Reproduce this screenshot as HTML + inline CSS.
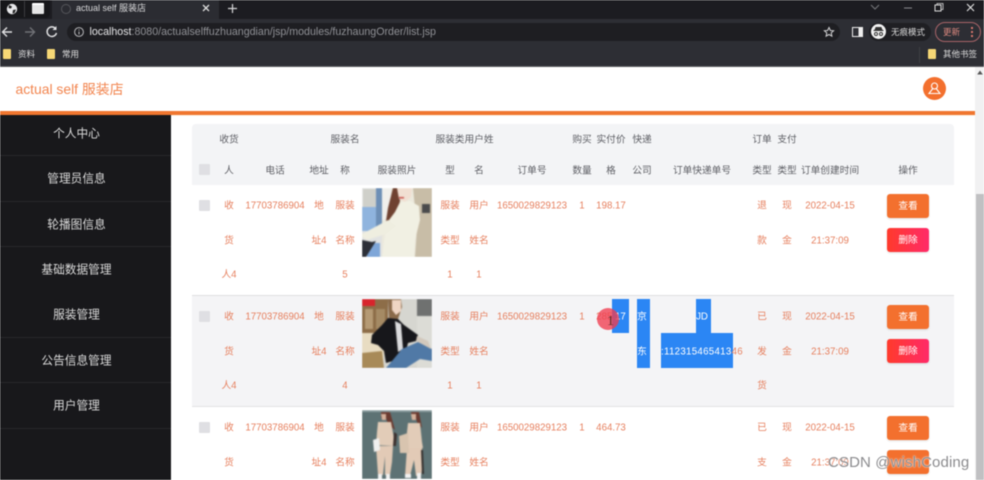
<!DOCTYPE html>
<html lang="zh"><head><meta charset="utf-8"><title>actual self 服装店</title>
<style>
html,body{margin:0;padding:0;width:984px;height:480px;overflow:hidden;background:#fff}
#root{position:relative;width:984px;height:480px;overflow:hidden;font-family:"Liberation Sans","Noto Sans CJK SC",sans-serif;filter:blur(.5px)}
.a{position:absolute}
.t{position:absolute;transform:translate(-50%,calc(-50% + 1.6px));white-space:nowrap;font-size:9.7px;line-height:12px}
.o .t{color:#e6805f}
.h .t{color:#5f6066}
.side{position:absolute;left:76.5px;transform:translate(-50%,-50%);margin-top:-.6px;font-size:11.7px;color:#dcdcdc;white-space:nowrap}
.ln{position:absolute;left:0;width:171px;height:1px;background:#27272a}
.cb{position:absolute;left:199px;width:11px;height:11px;background:#dfdfe3;border-radius:1px}
.bt{position:absolute;left:887px;width:42px;height:24px;border-radius:3px;color:#fff;font-size:9.7px;line-height:25px;text-align:center;box-shadow:0 1px 2px rgba(0,0,0,.12)}
.v{background:#f3702e}.d{background:linear-gradient(90deg,#ff3a2c,#ff2a68)}
.bl{position:absolute;background:#2b86f4}
.ph{position:absolute;left:362px;width:70px;height:69px;overflow:hidden}
.ph svg{display:block;filter:blur(.6px)}
.bm{position:absolute;width:8px;height:10px;background:#f6d775;border-radius:1px}
.chr{position:absolute;color:#cfd0d4;white-space:nowrap}
</style></head><body><div id="root">

<!-- browser chrome -->
<div class="a" style="left:0;top:0;width:984px;height:19px;background:#1c1c21"></div>
<div class="a" style="left:0;top:0;width:50px;height:18px;background:#17171a;border-radius:0 0 5px 0"></div>
<div class="a" style="left:52px;top:0;width:167px;height:19px;background:#2b2c32"></div>
<div class="a" style="left:0;top:19px;width:984px;height:47px;background:#2d2e34"></div>
<div class="a" style="left:0;top:66px;width:984px;height:1px;background:#5c5d62"></div>
<svg class="a" style="left:5px;top:2px" width="14" height="14" viewBox="0 0 14 14"><circle cx="7" cy="7" r="5.2" fill="#e8e8ea"/><path d="M4 3l3 1.5-1 2-2.5-.5zM8 8l3-.5-1.5 3.5-2 .5z" fill="#222"/></svg>
<div class="a" style="left:24px;top:1px;width:1px;height:16px;background:#3c3c40"></div>
<div class="a" style="left:32px;top:3px;width:12px;height:9px;background:#e6e6e6;border-top:2px solid #fff;border-radius:1px"></div>
<div class="a" style="left:61px;top:4px;width:8px;height:8px;border-radius:50%;border:1px solid #55565b"></div>
<div class="chr" style="left:76px;top:2px;font-size:9px;line-height:12px;color:#d8d8da">actual self 服装店</div>
<svg class="a" style="left:201px;top:3px" width="10" height="10" viewBox="0 0 10 10"><path d="M2 2l6 6M8 2L2 8" stroke="#dcdcdc" stroke-width="1.3"/></svg>
<svg class="a" style="left:227px;top:3px" width="11" height="11" viewBox="0 0 11 11"><path d="M5.5 1v9M1 5.500h9" stroke="#d6d6d8" stroke-width="1.2"/></svg>
<svg class="a" style="left:870px;top:2px" width="110" height="12" viewBox="0 0 110 12"><path d="M1 3l4 4 4-4" fill="none" stroke="#77787c"/><path d="M34 6h8" stroke="#8a8a8e"/><rect x="65" y="3" width="6" height="6" fill="none" stroke="#dcdcdc"/><path d="M67 3V1.500h6v6h-2" fill="none" stroke="#dcdcdc" stroke-width=".8"/><path d="M97 2l7 7M104 2l-7 7" stroke="#e4e4e4" stroke-width="1.1"/></svg>
<svg class="a" style="left:1px;top:23px" width="62" height="18" viewBox="0 0 62 18"><path d="M11 9H2M6 4.500L1.500 9 6 13.500" fill="none" stroke="#e0e0e2" stroke-width="1.400"/><path d="M24 9h9M29 4.500L33.500 9 29 13.500" fill="none" stroke="#707176" stroke-width="1.400"/><path d="M54.500 5.500A4.800 4.800 0 1 0 55.500 10" fill="none" stroke="#e2e2e4" stroke-width="1.400"/><path d="M55.500 3v4h-4z" fill="#e2e2e4"/></svg>
<div class="a" style="left:67px;top:23px;width:773px;height:18px;background:#1e1e22;border-radius:9px"></div>
<svg class="a" style="left:73px;top:26px" width="12" height="12" viewBox="0 0 12 12"><circle cx="6" cy="6" r="4.400" fill="none" stroke="#b8b8bb"/><path d="M6 5.500v3M6 3.500v1" stroke="#b8b8bb"/></svg>
<div class="chr" style="left:89.500px;top:25px;font-size:10.650px;line-height:14px;color:#8f9095"><span style="color:#e4e4e6">localhost</span>:8080/actualselffuzhuangdian/jsp/modules/fuzhaungOrder/list.jsp</div>
<svg class="a" style="left:823px;top:26px" width="12" height="12" viewBox="0 0 12 12"><path d="M6 1.500l1.400 3 3.200.3-2.400 2.100.7 3.200L6 8.500l-2.900 1.600.7-3.200L1.400 4.800l3.200-.3z" fill="none" stroke="#d2d2d4"/></svg>
<div class="a" style="left:852px;top:27px;width:9px;height:8px;border:1px solid #eee;background:linear-gradient(90deg,#2e2f35 60%,#eee 60%)"></div>
<div class="a" style="left:869px;top:23px;width:62px;height:18px;background:#1f1f23;border-radius:9px"></div>
<div class="a" style="left:871px;top:24px;width:15px;height:15px;background:#f2f2f2;border-radius:50%"></div>
<svg class="a" style="left:873px;top:27px" width="11" height="9" viewBox="0 0 11 9"><path d="M3 .5h5l1 2.500H2zM.5 3.500h10" stroke="#333" fill="#333"/><circle cx="3" cy="7" r="1.500" fill="none" stroke="#333"/><circle cx="8" cy="7" r="1.500" fill="none" stroke="#333"/></svg>
<div class="chr" style="left:891px;top:26px;font-size:8.500px;line-height:12px;color:#ddd">无痕模式</div>
<div class="a" style="left:935px;top:22px;width:44px;height:18px;border:1px solid #a86468;border-radius:10px"></div>
<div class="chr" style="left:943px;top:26px;font-size:8.500px;line-height:12px;color:#e08a80">更新</div>
<svg class="a" style="left:970px;top:26px" width="4" height="12" viewBox="0 0 4 12"><circle cx="2" cy="2" r="1.100" fill="#e07a70"/><circle cx="2" cy="6" r="1.100" fill="#e07a70"/><circle cx="2" cy="10" r="1.100" fill="#e07a70"/></svg>
<div class="bm" style="left:3px;top:49px"></div>
<div class="chr" style="left:18px;top:48px;font-size:8.500px;line-height:12px;color:#ddd">资料</div>
<div class="bm" style="left:47px;top:49px"></div>
<div class="chr" style="left:62px;top:48px;font-size:8.500px;line-height:12px;color:#ddd">常用</div>
<div class="a" style="left:919px;top:47px;width:1px;height:16px;background:#3e3f44"></div>
<div class="bm" style="left:928px;top:49px"></div>
<div class="chr" style="left:943px;top:48px;font-size:8.500px;line-height:12px;color:#ddd">其他书签</div>

<!-- app header -->
<div class="a" style="left:15.500px;top:81px;font-size:13.900px;line-height:17px;color:#f2854f;white-space:nowrap">actual self 服装店</div>
<div class="a" style="left:923px;top:77px;width:23px;height:23px;border-radius:50%;background:#f3702e"></div>
<svg class="a" style="left:927px;top:81px" width="15" height="15" viewBox="0 0 15 15"><circle cx="7.500" cy="5" r="3" fill="none" stroke="#fff" stroke-width="1.100"/><path d="M5.800 7.500L2 12.500h11L9.200 7.500" fill="none" stroke="#fff" stroke-width="1.100"/></svg>
<div class="a" style="left:0;top:111px;width:975px;height:4px;background:#f0762f"></div>
<div class="a" style="left:171px;top:115px;width:804px;height:1px;background:#fdf3e6"></div>

<!-- scrollbar -->
<div class="a" style="left:975px;top:67px;width:9px;height:413px;background:#f1f1f2"></div>
<div class="a" style="left:976px;top:194px;width:8px;height:286px;background:#c0c0c2"></div>
<svg class="a" style="left:977px;top:70px" width="6" height="5" viewBox="0 0 6 5"><path d="M3 .5L5.800 4.500H.2z" fill="#555"/></svg>

<!-- sidebar -->
<div class="a" style="left:0;top:115px;width:171px;height:365px;background:#18181b"></div>
<div class="ln" style="top:155px"></div><div class="ln" style="top:201px"></div><div class="ln" style="top:246px"></div><div class="ln" style="top:337px"></div><div class="ln" style="top:382px"></div><div class="ln" style="top:428px"></div>
<div class="side" style="top:133.500px">个人中心</div>
<div class="side" style="top:179px">管理员信息</div>
<div class="side" style="top:224.500px">轮播图信息</div>
<div class="side" style="top:269.700px">基础数据管理</div>
<div class="side" style="top:315px">服装管理</div>
<div class="side" style="top:360.500px">公告信息管理</div>
<div class="side" style="top:406px">用户管理</div>

<!-- table backgrounds -->
<div class="a" style="left:192px;top:124px;width:762px;height:61px;background:#f3f4f6;border-radius:4px 4px 0 0"></div>
<div class="a" style="left:192px;top:295px;width:762px;height:1px;background:#dedee0"></div>
<div class="a" style="left:192px;top:296px;width:762px;height:110px;background:#f4f4f6"></div>
<div class="a" style="left:192px;top:406px;width:762px;height:1px;background:#e2e2e4"></div>

<!-- header text -->
<div class="h">
<span class="t" style="left:229px;top:139px">收货</span>
<span class="t" style="left:345px;top:139px">服装名</span>
<span class="t" style="left:464.500px;top:139px">服装类用户姓</span>
<span class="t" style="left:582px;top:139px">购买</span>
<span class="t" style="left:611px;top:139px">实付价</span>
<span class="t" style="left:642px;top:139px">快递</span>
<span class="t" style="left:762px;top:139px">订单</span>
<span class="t" style="left:787px;top:139px">支付</span>
<span class="t" style="left:229px;top:170px">人</span>
<span class="t" style="left:275px;top:170px">电话</span>
<span class="t" style="left:319px;top:170px">地址</span>
<span class="t" style="left:345px;top:170px">称</span>
<span class="t" style="left:397px;top:170px">服装照片</span>
<span class="t" style="left:450px;top:170px">型</span>
<span class="t" style="left:479px;top:170px">名</span>
<span class="t" style="left:532px;top:170px">订单号</span>
<span class="t" style="left:582px;top:170px">数量</span>
<span class="t" style="left:611px;top:170px">格</span>
<span class="t" style="left:642px;top:170px">公司</span>
<span class="t" style="left:702px;top:170px">订单快递单号</span>
<span class="t" style="left:762px;top:170px">类型</span>
<span class="t" style="left:787px;top:170px">类型</span>
<span class="t" style="left:830px;top:170px">订单创建时间</span>
<span class="t" style="left:908px;top:170px">操作</span>
</div>
<div class="cb" style="top:164px"></div>

<!-- photos -->
<div class="ph" style="top:188px"><svg width="70" height="69" viewBox="0 0 70 69">
<rect width="70" height="69" fill="#ece9dd"/>
<rect width="20" height="69" fill="#e2e3e2"/><rect x="1" y="1" width="13" height="18" fill="#cfd0ca"/>
<rect x="0" y="19" width="15" height="24" fill="#8fb4de"/><rect x="14" y="0" width="6" height="40" fill="#6d8fb6"/>
<rect x="20" y="0" width="9" height="32" fill="#f0f0ec"/><rect x="5" y="55" width="13" height="14" fill="#7ea6d8"/>
<path d="M51 0H70V69H53L55 40z" fill="#c8bda7"/>
<path d="M31 0H40L38 12 37 24 27 36 24 33 26 20z" fill="#6f4231"/>
<path d="M35 0H50L49 9 43 14 37 11z" fill="#f1dfd2"/><rect x="37" y="9" width="5" height="1.500" fill="#c8504a"/>
<path d="M38 14L48 13 57 18 58 32 53 52 52 69H20L23 46 24 36 33 24z" fill="#f1f0e3"/>
<path d="M26 32L34 38 24 46 5 52 0 49 0 46z" fill="#efeee0"/>
<path d="M0 52L10 54 14 53 4 69H0z" fill="#2d3038"/>
<rect x="60" y="16" width="8" height="9" fill="#4a4a4c"/>
</svg></div>
<div class="ph" style="top:299px"><svg width="70" height="69" viewBox="0 0 70 69">
<rect width="70" height="69" fill="#d6d6d0"/>
<rect width="26" height="34" fill="#8d6d48"/><rect x="3" y="10" width="8" height="20" fill="#b59a74"/><rect x="14" y="10" width="9" height="20" fill="#a58a64"/>
<rect x="55" y="0" width="15" height="17" fill="#6f7170"/><rect x="55" y="17" width="15" height="52" fill="#dcdcd6"/>
<rect width="13" height="7" fill="#d8242c"/>
<path d="M0 34H20L23 48 20 69H0z" fill="#e8dcc2"/><path d="M0 54L20 52 22 69H0z" fill="#a88a58"/>
<path d="M26 0H39L40 8 36 20 27 20z" fill="#8a6a4a"/><path d="M30 1H39L39 12 34 16 30 11z" fill="#efd5c3"/>
<path d="M26 19L36 20 42 26 56 36 54 42 46 44 44 52 38 60 24 64 22 52 16 46 9 44 10 36 20 26z" fill="#17171b"/>
<path d="M33 22L39 25 41 50 36 53z" fill="#dcdcde"/>
<path d="M24 69L30 62 40 50 56 43 70 50 70 62 58 60 44 69z" fill="#5079a6"/>
<path d="M55 37L66 42 69 50 60 45 54 42z" fill="#d2c8bc"/>
</svg></div>
<div class="ph" style="top:410px"><svg width="70" height="69" viewBox="0 0 70 69">
<rect width="70" height="69" fill="#5d7274"/>
<path d="M0 0H70V2H0z" fill="#8ea0a2"/>
<path d="M19 2H28L33 20 26 14 24 8H19z" fill="#6a3a30"/><path d="M19 4H24V10L20 10z" fill="#d5b09a"/>
<path d="M16 12L29 12 33 34 32 36 14 35 15 22z" fill="#e2ccb8"/>
<path d="M14 36H31L30 52 28 65H23L23 46 21 65H16z" fill="#e2cab6"/>
<path d="M11 30l6-2 1 12-6 2z" fill="#f0f0f0"/><path d="M32 22l3 2-1 12-3 0z" fill="#3d3230"/>
<rect x="16" y="64" width="4" height="5" fill="#f2f2f2"/><rect x="24" y="64" width="4" height="5" fill="#f2f2f2"/>
<path d="M49 2H57L60 18 55 12 54 8H50z" fill="#6a3a30"/><path d="M49 4H54V10H50z" fill="#d5b09a"/>
<path d="M46 13L58 13 60 32 61 38 44 38 45 22z" fill="#e2ccb8"/>
<path d="M45 38H60L61 52 59 66H54L52 50 48 66H43z" fill="#e2cab6"/><path d="M59 40l2 0 1 24-2 0z" fill="#34302e"/>
<path d="M37 26l9-3 1 20-9 0z" fill="#d8c4af"/>
<rect x="43" y="64" width="6" height="4" fill="#f2f2f2"/><rect x="55" y="63" width="4" height="6" fill="#f2f2f2"/>
</svg></div>

<!-- blue selection -->
<div class="bl" style="left:612px;top:299px;width:17px;height:34px"></div>
<div class="bl" style="left:637px;top:299px;width:13px;height:69px"></div>
<div class="bl" style="left:696px;top:299px;width:15px;height:34px"></div>
<div class="bl" style="left:661px;top:333px;width:72px;height:35px"></div>

<!-- row 1 -->
<div class="o">
<div class="cb" style="top:200px"></div>
<span class="t" style="left:229px;top:205px">收</span><span class="t" style="left:229px;top:240px">货</span><span class="t" style="left:229px;top:274px">人4</span>
<span class="t" style="left:275px;top:205px">17703786904</span>
<span class="t" style="left:319px;top:205px">地</span><span class="t" style="left:319px;top:240px">址4</span>
<span class="t" style="left:345px;top:205px">服装</span><span class="t" style="left:345px;top:240px">名称</span><span class="t" style="left:345px;top:274px">5</span>
<span class="t" style="left:450px;top:205px">服装</span><span class="t" style="left:450px;top:240px">类型</span><span class="t" style="left:450px;top:274px">1</span>
<span class="t" style="left:479px;top:205px">用户</span><span class="t" style="left:479px;top:240px">姓名</span><span class="t" style="left:479px;top:274px">1</span>
<span class="t" style="left:532px;top:205px">1650029829123</span>
<span class="t" style="left:582px;top:205px">1</span>
<span class="t" style="left:611px;top:205px">198.17</span>
<span class="t" style="left:762px;top:205px">退</span><span class="t" style="left:762px;top:240px">款</span>
<span class="t" style="left:787px;top:205px">现</span><span class="t" style="left:787px;top:240px">金</span>
<span class="t" style="left:830px;top:205px">2022-04-15</span><span class="t" style="left:830px;top:240px">21:37:09</span>
</div>
<div class="bt v" style="top:194px">查看</div><div class="bt d" style="top:228px">删除</div>

<!-- row 2 -->
<div class="o">
<div class="cb" style="top:311px"></div>
<span class="t" style="left:229px;top:316px">收</span><span class="t" style="left:229px;top:351px">货</span><span class="t" style="left:229px;top:385px">人4</span>
<span class="t" style="left:275px;top:316px">17703786904</span>
<span class="t" style="left:319px;top:316px">地</span><span class="t" style="left:319px;top:351px">址4</span>
<span class="t" style="left:345px;top:316px">服装</span><span class="t" style="left:345px;top:351px">名称</span><span class="t" style="left:345px;top:385px">4</span>
<span class="t" style="left:450px;top:316px">服装</span><span class="t" style="left:450px;top:351px">类型</span><span class="t" style="left:450px;top:385px">1</span>
<span class="t" style="left:479px;top:316px">用户</span><span class="t" style="left:479px;top:351px">姓名</span><span class="t" style="left:479px;top:385px">1</span>
<span class="t" style="left:532px;top:316px">1650029829123</span>
<span class="t" style="left:582px;top:316px">1</span>
<span class="t" style="left:611px;top:316px">285.<b style="font-weight:400;color:#fff">17</b></span>
<span class="t" style="left:642px;top:316px;color:#fff">京</span><span class="t" style="left:642px;top:351px;color:#fff">东</span>
<span class="t" style="left:702px;top:316px;color:#fff">JD</span>
<span class="t" style="left:702px;top:351px;color:#fff;letter-spacing:.3px">:11231546541<b style="font-weight:400;color:#fff">3</b><b style="font-weight:400;color:#e6805f">46</b></span>
<span class="t" style="left:762px;top:316px">已</span><span class="t" style="left:762px;top:351px">发</span><span class="t" style="left:762px;top:385px">货</span>
<span class="t" style="left:787px;top:316px">现</span><span class="t" style="left:787px;top:351px">金</span>
<span class="t" style="left:830px;top:316px">2022-04-15</span><span class="t" style="left:830px;top:351px">21:37:09</span>
</div>
<div class="bt v" style="top:305px">查看</div><div class="bt d" style="top:339px">删除</div>

<!-- row 3 -->
<div class="o">
<div class="cb" style="top:422px"></div>
<span class="t" style="left:229px;top:427px">收</span><span class="t" style="left:229px;top:462px">货</span>
<span class="t" style="left:275px;top:427px">17703786904</span>
<span class="t" style="left:319px;top:427px">地</span><span class="t" style="left:319px;top:462px">址4</span>
<span class="t" style="left:345px;top:427px">服装</span><span class="t" style="left:345px;top:462px">名称</span>
<span class="t" style="left:450px;top:427px">服装</span><span class="t" style="left:450px;top:462px">类型</span>
<span class="t" style="left:479px;top:427px">用户</span><span class="t" style="left:479px;top:462px">姓名</span>
<span class="t" style="left:532px;top:427px">1650029829123</span>
<span class="t" style="left:582px;top:427px">1</span>
<span class="t" style="left:611px;top:427px">464.73</span>
<span class="t" style="left:762px;top:427px">已</span><span class="t" style="left:762px;top:462px">支</span>
<span class="t" style="left:787px;top:427px">现</span><span class="t" style="left:787px;top:462px">金</span>
<span class="t" style="left:830px;top:427px">2022-04-15</span><span class="t" style="left:830px;top:462px">21:37:09</span>
</div>
<div class="bt v" style="top:416px">查看</div><div class="bt v" style="top:450px"></div>

<!-- click marker -->
<div class="a" style="left:597px;top:308px;width:22px;height:22px;border-radius:50%;background:rgba(240,60,80,.78)"></div>
<div class="a" style="left:607px;top:314px;font-family:'Liberation Serif',serif;font-size:14px;line-height:15px;color:#5a2a2a">1</div>

<!-- watermark -->
<div class="a" style="left:828px;top:454px;font-size:15px;line-height:18px;letter-spacing:.12px;color:#8b8b8e;white-space:nowrap;text-shadow:0 0 1px #fff,0 0 2px rgba(255,255,255,.8)">CSDN @wishCoding</div>

</div></body></html>
